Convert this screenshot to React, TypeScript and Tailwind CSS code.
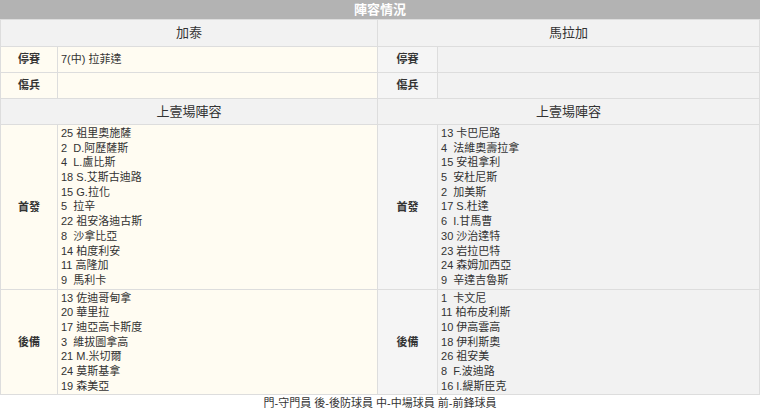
const home = ["25 祖里奧施薩", "2  D.阿歷薩斯", "4  L.盧比斯", "18 S.艾斯古迪路", "15 G.拉化", "5  拉辛", "22 祖安洛迪古斯", "8  沙拿比亞", "14 柏度利安", "11 高隆加", "9  馬利卡"];
const away = ["13 卡巴尼路", "4  法維奧壽拉拿", "15 安祖拿利", "5  安杜尼斯", "2  加美斯", "17 S.杜達", "6  I.甘馬曹", "30 沙治達特", "23 岩拉巴特", "24 森姆加西亞", "9  辛達吉魯斯"];
const homeSub = ["13 佐迪哥甸拿", "20 華里拉", "17 迪亞高卡斯度", "3  維拔圖拿高", "21 M.米切爾", "24 莫斯基拿", "19 森美亞"];
const awaySub = ["1  卡文尼", "11 柏布皮利斯", "10 伊高雲高", "18 伊利斯奧", "26 祖安美", "8  F.波迪路", "16 I.緹斯臣克"];

function List({ items }: { items: string[] }) {
	return (
		<div className="py-[1px]">
			{items.map((s) => (
				<div key={s} className="h-[14.7px] leading-[14.7px] whitespace-pre">{s}</div>
			))}
		</div>
	);
}

export default function App() {
	const td = "border border-[#dddddd] px-[3px]";
	const label = "border border-[#dddddd] text-center font-bold w-[57px]";
	return (
		<div className="w-[760px] text-[11px] text-[#333]" style={{ fontFamily: '"Liberation Sans", "Noto Sans CJK TC", sans-serif' }}>
			<div className="h-[19px] bg-[#b3b3b3] text-white text-[13px] font-bold text-center leading-[19px]">陣容情況</div>
			<table className="w-full border-collapse table-fixed">
				<colgroup>
					<col className="w-[57px]" />
					<col className="w-[320px]" />
					<col className="w-[60px]" />
					<col />
				</colgroup>
				<tbody>
					<tr className="h-[27px] bg-[#f2f2f2] text-[13px]">
						<td colSpan={2} className="border border-[#dddddd] text-center">加泰</td>
						<td colSpan={2} className="border border-[#dddddd] text-center">馬拉加</td>
					</tr>
					<tr className="h-[26px]">
						<td className={`${label} bg-[#fffcf2]`}>停賽</td>
						<td className={`${td} bg-[#fffcf2]`}>7(中) 拉菲達</td>
						<td className={`${label} bg-[#f5f5f5]`}>停賽</td>
						<td className={`${td} bg-[#f2f2f2]`}></td>
					</tr>
					<tr className="h-[26px]">
						<td className={`${label} bg-[#fffcf2]`}>傷兵</td>
						<td className={`${td} bg-[#fffcf2]`}></td>
						<td className={`${label} bg-[#f5f5f5]`}>傷兵</td>
						<td className={`${td} bg-[#f2f2f2]`}></td>
					</tr>
					<tr className="h-[26px] bg-[#f2f2f2] text-[13px]">
						<td colSpan={2} className="border border-[#dddddd] text-center">上壹場陣容</td>
						<td colSpan={2} className="border border-[#dddddd] text-center">上壹場陣容</td>
					</tr>
					<tr>
						<td className={`${label} bg-[#fffcf2]`}>首發</td>
						<td className={`${td} bg-[#fffcf2]`}><List items={home} /></td>
						<td className={`${label} bg-[#f5f5f5]`}>首發</td>
						<td className={`${td} bg-[#f2f2f2]`}><List items={away} /></td>
					</tr>
					<tr>
						<td className={`${label} bg-[#fffcf2]`}>後備</td>
						<td className={`${td} bg-[#fffcf2]`}><List items={homeSub} /></td>
						<td className={`${label} bg-[#f5f5f5]`}>後備</td>
						<td className={`${td} bg-[#f2f2f2]`}><List items={awaySub} /></td>
					</tr>
				</tbody>
			</table>
			<div className="text-center h-[16px] leading-[16px]">門-守門員 後-後防球員 中-中場球員 前-前鋒球員</div>
		</div>
	);
}
